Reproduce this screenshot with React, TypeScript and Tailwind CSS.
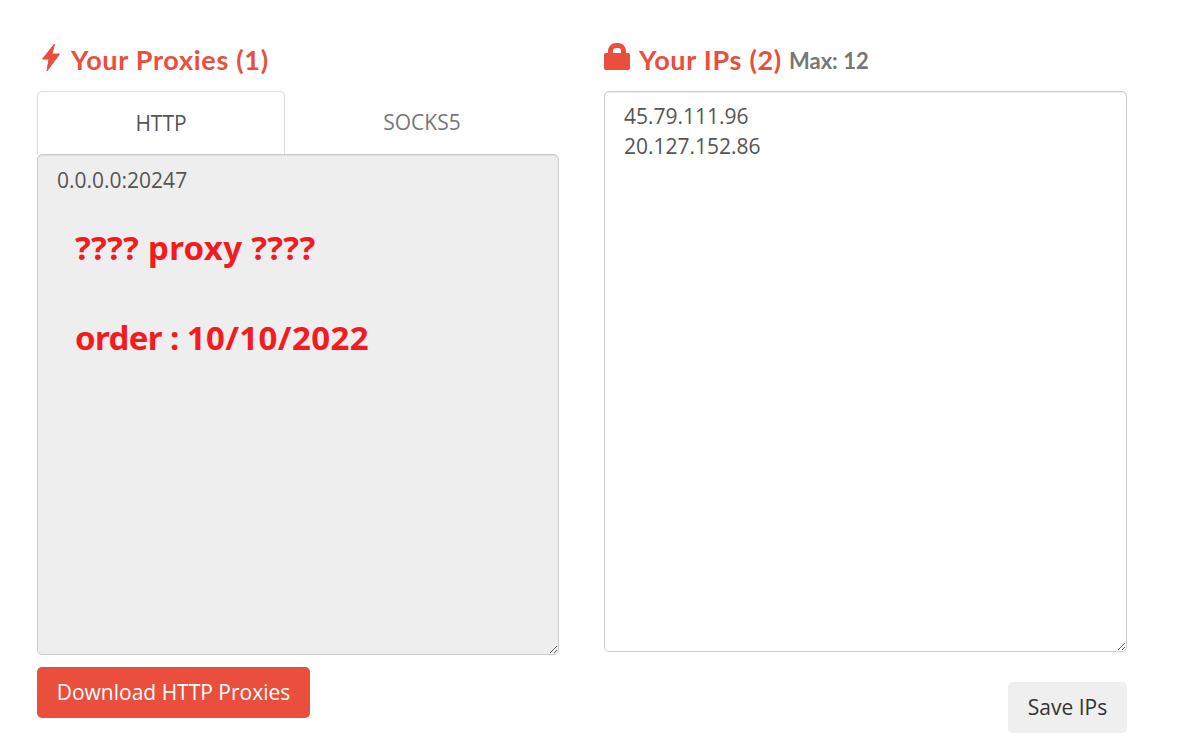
export default function App() {
  const body = "font-['Open_Sans',sans-serif]";
  return (
    <div className={`${body} w-[1180px] h-[753px] bg-white overflow-hidden pl-[37px] pr-[53px] pt-[40px] flex gap-[45px]`}>
      <div className="w-[522px] shrink-0 flex flex-col">
        <h2 className="h-[51px] flex items-start font-['Lato',sans-serif] font-bold text-[27px] tracking-[0.7px] leading-[40px] text-[#ea4e3d]">
          <svg viewBox="0 0 22 30" className="mt-[2px] ml-[3px] mr-[9px] w-[22px] h-[30px]" fill="currentColor" stroke="currentColor" strokeWidth="1" strokeLinejoin="round">
            <path d="M14.500 2L2.500 17H9L7 29L19.500 12H12Z" />
          </svg>
          <span>Your Proxies (1)</span>
        </h2>
        <div className="flex h-[63px]">
          <div className="w-[248px] h-[64px] relative z-10 bg-white border border-b-0 border-[#dddddd] rounded-t-[5px] flex items-center justify-center text-[21px] text-[#555555]">HTTP</div>
          <div className="flex-1 flex items-center justify-center text-[21px] text-[#777777]">SOCKS5</div>
        </div>
        <div className="relative z-20 h-[501px]">
          <textarea
            readOnly
            value="0.0.0.0:20247"
            className="block w-full h-full bg-[#eeeeee] border border-[#cccccc] rounded-[5px] shadow-[inset_0_1px_1px_rgba(0,0,0,0.075)] px-[19px] py-[10px] text-[21px] leading-[30px] text-[#555555] outline-none resize-y"
          />
          <div className="absolute left-[38px] top-[71px] font-['Noto_Sans',sans-serif] font-bold text-[33px] leading-[46px] text-[#f41a22] whitespace-nowrap">
            <p className="tracking-[0.3px]">???? proxy ????</p>
            <p className="mt-[44px]">
              <span className="tracking-[-0.6px]">order : </span>
              <span className="tracking-[0.4px]">10/10/2022</span>
            </p>
          </div>
        </div>
        <button className="mt-[12px] w-[273px] h-[51px] bg-[#ea4e3d] rounded-[5px] text-white text-[21px] flex items-center justify-center">
          Download HTTP Proxies
        </button>
      </div>
      <div className="w-[523px] shrink-0 flex flex-col">
        <h2 className="h-[51px] flex items-start font-['Lato',sans-serif] font-bold text-[27px] tracking-[0.7px] leading-[40px] text-[#ea4e3d]">
          <svg viewBox="0 0 26 27" className="mt-[3px] w-[26px] h-[27px] mr-[9px]" fill="currentColor">
            <path d="M4 10V8a8 8 0 0 1 8-8h2a8 8 0 0 1 8 8v2h-5V8a3 3 0 0 0-3-3h-2a3 3 0 0 0-3 3v2z" />
            <rect x="0" y="10" width="26" height="17" rx="2" />
          </svg>
          <span>Your IPs (2)</span>
          <span className="ml-[7px] text-[22px] tracking-normal text-[#777777] pt-[1px]">Max: 12</span>
        </h2>
        <textarea
          readOnly
          value={"45.79.111.96\n20.127.152.86"}
          className="block w-full h-[561px] bg-white border border-[#cccccc] rounded-[5px] shadow-[inset_0_1px_1px_rgba(0,0,0,0.075)] px-[19px] py-[9px] text-[21px] leading-[30px] text-[#555555] outline-none resize-y"
        />
        <div className="flex justify-end mt-[30px]">
          <button className="w-[119px] h-[51px] bg-[#efefef] rounded-[5px] text-[#333333] text-[21px] flex items-center justify-center">
            Save IPs
          </button>
        </div>
      </div>
    </div>
  );
}
